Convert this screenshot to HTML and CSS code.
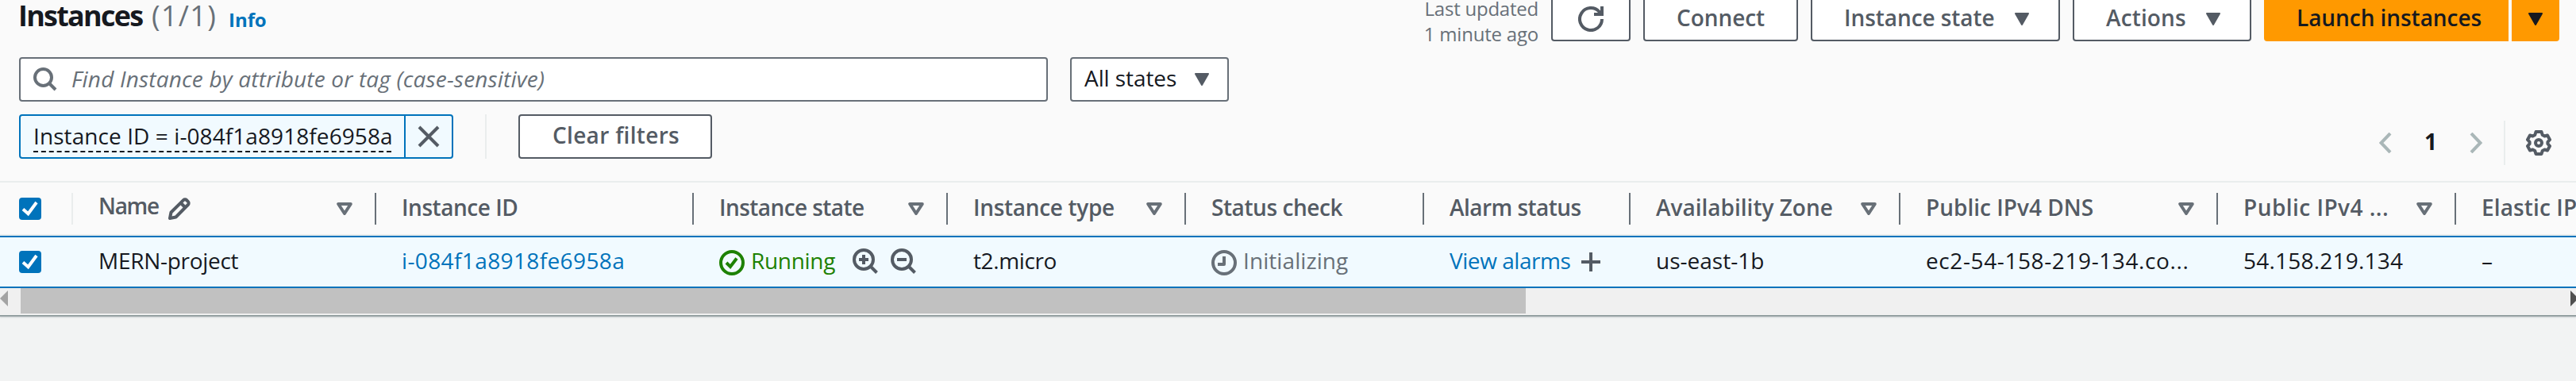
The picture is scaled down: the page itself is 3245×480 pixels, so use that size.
FILE: index.html
```html
<!DOCTYPE html>
<html lang="en">
<head>
<meta charset="utf-8">
<title>Instances</title>
<link rel="stylesheet" href="styles.css">
</head>
<body>
<svg class="defs" width="0" height="0">
  <symbol id="caret" viewBox="0 0 20 16"><path d="M2 1h16L10 15z" fill="currentColor" stroke="currentColor" stroke-width="2" stroke-linejoin="round"/></symbol>
  <symbol id="sort" viewBox="0 0 20 16"><path d="M2.200 2h15.600L10 14z" fill="none" stroke="currentColor" stroke-width="4" stroke-linejoin="round"/></symbol>
  <symbol id="check" viewBox="0 0 28 28"><path d="M5 14.500l6.500 5.700L22 6" fill="none" stroke="#fff" stroke-width="4"/></symbol>
</svg>
<main class="panel">
  <header class="top">
    <h2 class="title">Instances</h2>
    <span class="counter">(1/1)</span>
    <a class="info">Info</a>
    <div class="updated"><div class="upd-a">Last updated</div><div class="upd-b">1 minute ago</div></div>
    <button class="btn refresh" aria-label="Refresh"><svg width="32" height="32" viewBox="0 0 32 32"><path d="M30 16A14 14 0 1 1 26.500 6.800L28 9" fill="none" stroke="currentColor" stroke-width="4"/><path d="M30 0v10H20" fill="none" stroke="currentColor" stroke-width="4"/></svg></button>
    <button class="btn connect">Connect</button>
    <button class="btn state">Instance state<svg class="caret"><use href="#caret"/></svg></button>
    <button class="btn actions">Actions<svg class="caret"><use href="#caret"/></svg></button>
    <button class="btn launch">Launch instances</button>
    <button class="btn launch-more" aria-label="More"><svg class="caret"><use href="#caret"/></svg></button>
  </header>
  <div class="filters">
    <div class="search">
      <svg width="30" height="30" viewBox="0 0 30 30"><circle cx="12.500" cy="12.500" r="10.500" fill="none" stroke="currentColor" stroke-width="4"/><path d="M20 20l8 8" stroke="currentColor" stroke-width="4"/></svg>
      <span class="placeholder">Find Instance by attribute or tag (case-sensitive)</span>
    </div>
    <div class="select"><span>All states</span><svg class="caret"><use href="#caret"/></svg></div>
  </div>
  <div class="tokens">
    <div class="token">
      <div class="token-body"><span class="token-text">Instance ID = i-084f1a8918fe6958a</span></div>
      <div class="token-x"><svg width="28" height="28" viewBox="0 0 28 28"><path d="M2 2l24 24M26 2L2 26" stroke="currentColor" stroke-width="4"/></svg></div>
    </div>
    <div class="rule"></div>
    <button class="btn clear">Clear filters</button>
    <div class="pager">
      <svg class="chev" width="16" height="26" viewBox="0 0 16 26"><path d="M14 1L2.500 13L14 25" fill="none" stroke="currentColor" stroke-width="4"/></svg>
      <b class="page">1</b>
      <svg class="chev" width="16" height="26" viewBox="0 0 16 26"><path d="M2 1L13.500 13L2 25" fill="none" stroke="currentColor" stroke-width="4"/></svg>
      <div class="rule"></div>
      <svg class="gear" width="32" height="32" viewBox="0 0 32 32" fill="none" stroke="currentColor" stroke-width="4" stroke-linejoin="round"><path d="M12.500 2h7l1.200 4 2.800 1.500 3.500-1 3 5.500-2.600 2.800v2.400L30 20l-3 5.500-3.500-1-2.800 1.500-1.200 4h-7l-1.200-4-2.800-1.500-3.500 1L2 20l2.600-2.800v-2.400L2 12l3-5.500 3.500 1L11.300 6z"/><circle cx="16" cy="16" r="4"/></svg>
    </div>
  </div>
  <div class="table head">
    <div class="th first"><span class="box"><svg width="28" height="28"><use href="#check"/></svg></span></div>
    <div class="th name"><span class="t-name">Name</span><svg class="pencil" width="28" height="28" viewBox="0 0 28 28" fill="none" stroke="currentColor" stroke-width="4" stroke-linejoin="round"><path d="M2 26l1.500-7.500L19 3.200a3 3 0 0 1 4.200 0l1.600 1.600a3 3 0 0 1 0 4.200L9.500 24.500z"/><path d="M16 7l5 5"/></svg><svg class="sort"><use href="#sort"/></svg></div>
    <div class="th"><span class="t-id">Instance ID</span></div>
    <div class="th"><span class="t-state">Instance state</span><svg class="sort"><use href="#sort"/></svg></div>
    <div class="th"><span class="t-type">Instance type</span><svg class="sort"><use href="#sort"/></svg></div>
    <div class="th"><span class="t-check">Status check</span></div>
    <div class="th"><span class="t-alarm">Alarm status</span></div>
    <div class="th"><span class="t-zone">Availability Zone</span><svg class="sort"><use href="#sort"/></svg></div>
    <div class="th"><span class="t-dns">Public IPv4 DNS</span><svg class="sort"><use href="#sort"/></svg></div>
    <div class="th"><span class="t-ip">Public IPv4 ...</span><svg class="sort"><use href="#sort"/></svg></div>
    <div class="th last"><span class="t-elastic">Elastic IP</span></div>
  </div>
  <div class="table row">
    <div class="td first"><span class="box"><svg width="28" height="28"><use href="#check"/></svg></span></div>
    <div class="td"><span class="v-name">MERN-project</span></div>
    <div class="td"><a class="v-id">i-084f1a8918fe6958a</a></div>
    <div class="td running">
      <svg class="ok" width="32" height="32" viewBox="0 0 32 32" fill="none" stroke="currentColor" stroke-width="4"><circle cx="16" cy="16" r="14"/><path d="M9 16l5 5 8-10.500"/></svg>
      <span class="v-run">Running</span>
      <svg class="zoom" width="32" height="32" viewBox="0 0 32 32" fill="none" stroke="currentColor" stroke-width="4"><circle cx="14" cy="14" r="12"/><path d="M22.500 22.500l8 8M8 14h12M14 8v12"/></svg>
      <svg class="zoom minus" width="32" height="32" viewBox="0 0 32 32" fill="none" stroke="currentColor" stroke-width="4"><circle cx="14" cy="14" r="12"/><path d="M22.500 22.500l8 8M8 14h12"/></svg>
    </div>
    <div class="td"><span class="v-type">t2.micro</span></div>
    <div class="td pending">
      <svg class="clock" width="32" height="32" viewBox="0 0 32 32" fill="none" stroke="currentColor" stroke-width="4"><circle cx="16" cy="16" r="14"/><path d="M16 8v10H8" stroke-linejoin="round"/></svg>
      <span class="v-init">Initializing</span>
    </div>
    <div class="td"><a class="v-alarm">View alarms</a><svg class="plus" width="24" height="24" viewBox="0 0 24 24"><path d="M0 12h24M12 0v24" stroke="currentColor" stroke-width="4"/></svg></div>
    <div class="td"><span class="v-zone">us-east-1b</span></div>
    <div class="td"><span class="v-dns">ec2-54-158-219-134.co...</span></div>
    <div class="td"><span class="v-ip">54.158.219.134</span></div>
    <div class="td"><span>–</span></div>
  </div>
  <div class="scrollbar">
    <svg width="10" height="20" viewBox="0 0 10 20"><path d="M10 0v20L0 10z" fill="#a3a3a3"/></svg>
    <div class="thumb"></div>
    <svg class="right" width="10" height="20" viewBox="0 0 10 20"><path d="M0 0v20L10 10z" fill="#505050"/></svg>
  </div>
</main>
</body>
</html>
```
FILE: styles.css
```css
* { box-sizing: border-box; }
body {
  margin: 0;
  height: 480px;
  overflow: hidden;
  background: #f2f3f3;
  color: #16191f;
  font: 28px/40px "Open Sans", "Noto Sans", sans-serif;
  white-space: nowrap;
}
svg { display: block; flex: none; }
.defs { position: absolute; }
.panel {
  width: 3245px;
  height: 397px;
  overflow: visible;
  background: #fafafa;
  box-shadow: 0 1px 0 #879596, 0 2px 1px #a5adb0, 0 3px 2px #d5dbdb;
}

/* Title and actions */
.top { display: flex; height: 52px; padding-left: 23px; }
.title { width: 168px; margin: 0; font-size: 36px; font-weight: 700; letter-spacing: -1.75px; }
.counter { font-size: 36px; color: #687078; letter-spacing: 1.3px; }
.info { margin: 5px 0 0 15px; font-size: 24px; font-weight: 700; color: #0073bb; letter-spacing: -.1px; }
.updated { margin: -5px 16px 0 auto; font-size: 24px; line-height: 32px; color: #687078; text-align: right; }
.upd-a { letter-spacing: -.23px; }
.upd-b { letter-spacing: -.21px; }
.btn {
  display: flex;
  align-items: center;
  flex: none;
  height: 56px;
  margin: 0;
  padding: 0 0 4px;
  border: 2px solid #545b64;
  border-radius: 4px;
  background: #fff;
  color: #545b64;
  font: 600 28px/40px "Open Sans", "Noto Sans", sans-serif;
}
.top .btn { margin-top: -4px; }
.caret { width: 20px; height: 16px; margin-top: 4px; color: #545b64; }
.btn .caret { margin-left: 24px; color: inherit; }
.refresh { width: 100px; padding: 0 0 0 32px; }
.connect { width: 195px; margin-left: 16px !important; padding-left: 40px; letter-spacing: -.07px; }
.state { width: 314px; margin-left: 16px !important; padding-left: 40px; letter-spacing: -.07px; }
.actions { width: 225px; margin-left: 16px !important; padding-left: 40px; letter-spacing: .14px; }
.btn.launch, .btn.launch-more { border: 0; background: #f90; color: #16191f; }
.btn.launch { width: 308px; margin-left: 16px; padding-left: 41px; border-radius: 4px 0 0 4px; letter-spacing: -.06px; }
.btn.launch-more { width: 60px; margin: -4px 21px 0 4px; border-radius: 0 4px 4px 0; }
.btn.launch-more .caret { margin-left: 20px; }

/* Search and filters */
.filters { display: flex; gap: 28px; padding: 20px 24px 0; }
.search, .select { display: flex; align-items: center; height: 56px; border: 2px solid #687078; border-radius: 4px; background: #fff; }
.search { width: 1296px; padding-left: 16px; color: #687078; }
.placeholder { margin: 0 0 2px 18px; font-style: italic; letter-spacing: .18px; }
.select { width: 200px; justify-content: space-between; padding: 0 22px 4px 16px; letter-spacing: -.08px; }
.tokens { display: flex; padding: 16px 24px 0; height: 100px; }
.token { display: flex; width: 547px; height: 56px; border: 2px solid #0073bb; border-radius: 4px; background: #f1faff; }
.token-body { width: 485px; padding: 4px 0 0 16px; border-right: 2px solid #0073bb; }
.token-text { display: block; width: 451px; height: 42px; line-height: 42px; border-bottom: 2px dashed #16191f; letter-spacing: .08px; }
.token-x { padding: 12px 0 0 15px; color: #545b64; }
.rule { width: 2px; height: 56px; background: #eaeded; }
.token + .rule { margin: 0 40px; }
.clear { width: 244px; padding-left: 41px; letter-spacing: .31px; }
.pager { display: flex; align-items: center; height: 56px; margin: 8px 7px 0 auto; }
.chev { color: #aab7b8; }
.page { width: 98px; font-weight: 700; text-align: center; padding-bottom: 4px; }
.pager .rule { margin: 0 26px 0 27px; }
.gear { color: #545b64; }

/* Table */
.table { display: grid; grid-template-columns: 92px 382px 400px 320px 300px 300px 260px 340px 400px 300px 151px; }
.head { height: 69px; border-top: 2px solid #eaeded; border-bottom: 2px solid #eaeded; font-weight: 600; color: #545b64; }
.th { display: flex; align-items: center; height: 40px; margin-top: 13px; padding: 0 28px 0 32px; border-right: 2px solid #687078; }
.th span { padding-bottom: 4px; }
.th.first, .td.first { padding-left: 24px; border-color: #eaeded; }
.th.last { border: 0; padding-right: 0; overflow: hidden; }
.th .box, .td .box { width: 28px; height: 28px; padding: 0; border-radius: 4px; background: #0073bb; }
.sort { width: 20px; height: 16px; margin-left: auto; color: #687078; }
.th .t-name { padding-bottom: 8px; letter-spacing: -1.3px; }
.pencil { margin-left: 12px; }
.t-id { letter-spacing: -.47px; }
.t-state { letter-spacing: -.57px; }
.t-type { letter-spacing: -.32px; }
.t-check { letter-spacing: -.43px; }
.t-alarm { letter-spacing: -.54px; }
.t-ip { letter-spacing: .46px; }
.t-elastic { letter-spacing: .12px; }
.row { height: 66px; border-top: 2px solid #0073bb; border-bottom: 2px solid #0073bb; background: #f1faff; }
.td { display: flex; align-items: center; padding-left: 32px; }
.td span, .td a { padding-bottom: 4px; }
.td a { color: #0073bb; }
.v-name { letter-spacing: -.29px; }
.v-id { letter-spacing: .38px; }
.running { color: #1d8102; }
.v-run { margin-left: 8px; letter-spacing: -.3px; }
.ok, .clock { margin-top: 2px; }
.zoom { margin: -3px 0 0 22px; color: #545b64; }
.zoom.minus { margin-left: 16px; }
.v-type { letter-spacing: -.38px; }
.pending { color: #687078; }
.v-init { margin-left: 8px; letter-spacing: .08px; }
.v-alarm { letter-spacing: -.45px; }
.plus { margin-left: 14px; color: #545b64; }
.v-dns { letter-spacing: .6px; }
.v-ip { letter-spacing: .22px; }

.scrollbar { display: flex; height: 34px; padding-top: 3px; background: #f0f0f0; overflow: hidden; }
.thumb { flex: none; width: 1896px; height: 32px; margin: -3px 0 0 16px; background: #c1c1c1; }
.scrollbar .right { margin-left: 1316px; }
```
